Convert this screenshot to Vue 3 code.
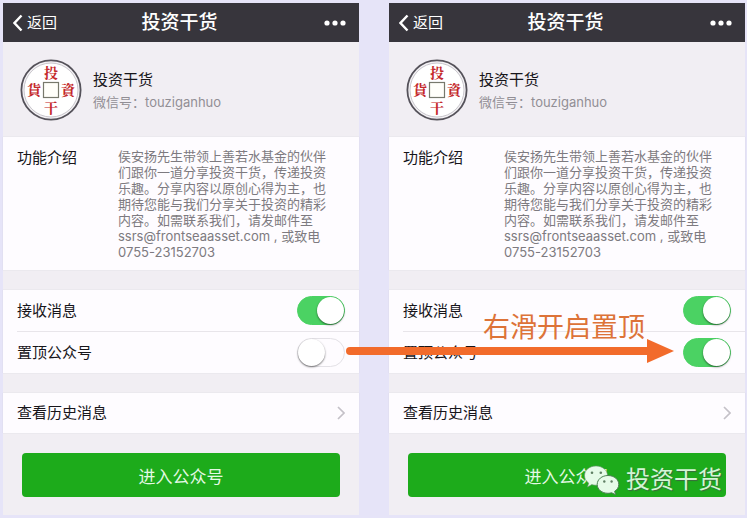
<template>
  <main class="stage">
    <section v-for="phone in phones" :key="phone.id" class="phone">
      <header class="navbar">
        <button class="nav-button" type="button">
          <svg width="10" height="18" viewBox="0 0 10 18" aria-hidden="true">
            <path d="M8.5 1.5 1.5 9l7 7.5" fill="none" stroke="#fff" stroke-width="2.4" />
          </svg>
          返回
        </button>
        <h1 class="title">投资干货</h1>
        <button class="nav-button more" type="button" aria-label="更多">
          <svg width="22" height="6" viewBox="0 0 22 6" aria-hidden="true">
            <circle v-for="cx in [3, 11, 19]" :key="cx" :cx="cx" cy="3" r="2.6" fill="#fff" />
          </svg>
        </button>
      </header>

      <div class="profile">
        <svg class="avatar" viewBox="0 0 62 62" aria-hidden="true">
          <circle cx="31" cy="31" r="29.6" fill="#f4f2f5" stroke="#55525a" stroke-width="1.8" />
          <circle cx="31" cy="31" r="27" fill="#fff" stroke="#c9c6cc" stroke-width="1" />
          <rect x="23.5" y="23.5" width="15" height="15" fill="#fffffa" stroke="#77796c" stroke-width="1.2" />
          <text
            v-for="mark in marks"
            :key="mark.char"
            class="mark"
            :x="mark.x"
            :y="mark.y"
          >{{ mark.char }}</text>
        </svg>
        <div>
          <h2 class="name">投资干货</h2>
          <p class="account">微信号：touziganhuo</p>
        </div>
      </div>

      <div class="group intro">
        <h3 class="label">功能介绍</h3>
        <p class="intro-text">{{ intro }}</p>
      </div>

      <div class="group">
        <div class="row">
          <label class="label" :for="`${phone.id}-receive`">接收消息</label>
          <input :id="`${phone.id}-receive`" v-model="phone.receive" class="switch" type="checkbox" />
        </div>
        <div class="row">
          <label class="label" :for="`${phone.id}-sticky`">置顶公众号</label>
          <input :id="`${phone.id}-sticky`" v-model="phone.sticky" class="switch" type="checkbox" />
        </div>
      </div>

      <a class="group history" href="#">
        查看历史消息
        <svg width="8" height="14" viewBox="0 0 8 14" aria-hidden="true">
          <path d="M1 1l6 6-6 6" fill="none" stroke="#c4c1c8" stroke-width="1.7" />
        </svg>
      </a>

      <button class="enter" type="button">进入公众号</button>
    </section>

    <p class="hint">右滑开启置顶</p>
    <div class="arrow">
      <span class="arrow-line"></span>
      <svg width="27" height="24" viewBox="0 0 27 24" aria-hidden="true">
        <path d="M0 0l27 12L0 24z" fill="#f26b2b" />
      </svg>
    </div>

    <div class="watermark">
      <svg width="36" height="30" viewBox="0 0 36 30" aria-hidden="true">
        <path
          d="M12 1C5.400 1 .5 5.300.5 10.600c0 3 1.600 5.600 4.200 7.400L3.500 22l4.300-2.400c1.300.4 2.700.6 4.200.6 6.500 0 11.500-4.300 11.500-9.600S18.500 1 12 1z"
          fill="#e6fbe8"
          stroke="#6b8f70"
          stroke-width=".6"
        />
        <path
          d="M24 10.500c-6 0-10.800 3.900-10.800 8.900S18 28.300 24 28.300c1.300 0 2.600-.2 3.700-.5l4 2-1.100-3.500c2.600-1.600 4.200-4.100 4.200-6.900 0-5-4.800-8.900-10.800-8.900z"
          fill="#e6fbe8"
          stroke="#4d7f53"
          stroke-width="1"
        />
        <g fill="#5f7f63">
          <circle cx="8" cy="7.800" r="1.300" />
          <circle cx="16.800" cy="7.800" r="1.300" />
          <circle cx="20.300" cy="16.500" r="1.200" />
          <circle cx="27.600" cy="16.500" r="1.200" />
        </g>
      </svg>
      <span>投资干货</span>
    </div>
  </main>
</template>

<script setup>
import { ref } from "vue";

const phones = ref([
  { id: "before", receive: true, sticky: false },
  { id: "after", receive: true, sticky: true },
]);

const marks = [
  { char: "投", x: 31, y: 19 },
  { char: "資", x: 48, y: 36 },
  { char: "干", x: 31, y: 54 },
  { char: "貨", x: 14, y: 36 },
];

const intro =
  "侯安扬先生带领上善若水基金的伙伴们跟你一道分享投资干货，传递投资乐趣。分享内容以原创心得为主，也期待您能与我们分享关于投资的精彩内容。如需联系我们，请发邮件至ssrs@frontseaasset.com , 或致电0755-23152703";
</script>

<style>
body {
  margin: 0;
  background: #e6e4f8;
}
</style>

<style scoped>
.stage {
  position: relative;
  display: grid;
  grid-template-columns: 1fr 1fr;
  gap: 30px;
  padding: 3px 2px 3px 3px;
  color: #17151a;
  font-family: Inter, "Noto Sans CJK SC", sans-serif;
  font-size: 15px;
  line-height: 20px;
}

h1,
h2,
h3,
p {
  margin: 0;
  font-weight: 400;
}

button {
  border: 0;
  font-family: inherit;
  cursor: pointer;
}

.phone {
  display: flex;
  flex-direction: column;
  background: #f1eef3;
}

.navbar {
  display: grid;
  grid-template-columns: 1fr auto 1fr;
  align-items: center;
  height: 39px;
  padding: 0 13px 0 10px;
  background: #37353c;
}

.nav-button {
  display: flex;
  align-items: center;
  gap: 4px;
  justify-self: start;
  padding: 0;
  background: none;
  color: #fff;
  font-size: 15px;
  line-height: 20px;
}

.more {
  justify-self: end;
}

.title {
  color: #fff;
  font-size: 19px;
  font-weight: 500;
  line-height: 26px;
}

.profile {
  display: flex;
  align-items: center;
  gap: 11px;
  height: 95px;
  padding: 0 17px;
}

.avatar {
  width: 62px;
  height: 62px;
}

.mark {
  fill: #c4282b;
  font-family: "Noto Serif CJK TC", "Noto Sans CJK TC", serif;
  font-size: 14px;
  font-weight: 700;
  text-anchor: middle;
}

.name {
  font-size: 15px;
  line-height: 24px;
}

.account {
  color: #918e95;
  font-size: 13px;
  line-height: 20px;
}

.group {
  margin-bottom: 20px;
  background: #fefcff;
  box-shadow: 0 0 1px #cfccd2;
}

.label {
  font-size: 15px;
}

.intro {
  display: grid;
  grid-template-columns: 101px 1fr;
  padding: 11px 28px 10px 14px;
}

.intro-text {
  color: #7d7a80;
  font-size: 13px;
  line-height: 16px;
}

.row {
  display: flex;
  align-items: center;
  justify-content: space-between;
  height: 41px;
  margin-left: 14px;
  padding-right: 14px;
}

.row + .row {
  border-top: 1px solid #e8e5ea;
}

.switch {
  box-sizing: border-box;
  width: 48px;
  height: 29px;
  margin: 0;
  padding: 0;
  appearance: none;
  border: 1px solid #e3e1e6;
  border-radius: 15px;
  background: #fefcff;
  cursor: pointer;
}

.switch::before {
  content: "";
  display: block;
  width: 27px;
  height: 27px;
  border-radius: 50%;
  background: #fff;
  box-shadow: 0 1px 2px rgba(0, 0, 0, 0.55);
}

.switch:checked {
  border-color: #4bd263;
  background: #4bd263;
}

.switch:checked::before {
  margin-left: auto;
}

.history {
  display: flex;
  align-items: center;
  justify-content: space-between;
  height: 40px;
  padding: 0 14px;
  color: inherit;
  text-decoration: none;
}

.enter {
  height: 44px;
  margin: 0 19px 18px;
  border-radius: 4px;
  background: #1dab1b;
  color: #e4f9e4;
  font-size: 17px;
}

/* annotation drawn over both screens */
.hint {
  position: absolute;
  top: 310px;
  right: 102px;
  color: #dd7338;
  font-size: 27px;
  line-height: 36px;
}

.arrow {
  position: absolute;
  top: 339px;
  right: 73px;
  left: calc(50% - 28px);
  display: flex;
  align-items: center;
}

.arrow-line {
  flex: 1;
  height: 8px;
  border-radius: 4px 0 0 4px;
  background: #f26b2b;
}

.watermark {
  position: absolute;
  right: 25px;
  bottom: 20px;
  display: flex;
  align-items: center;
  gap: 6px;
  color: #d3f5d5;
  font-size: 24px;
  line-height: 36px;
  text-shadow: 1px 1px 1px #3b6b3e;
}
</style>
